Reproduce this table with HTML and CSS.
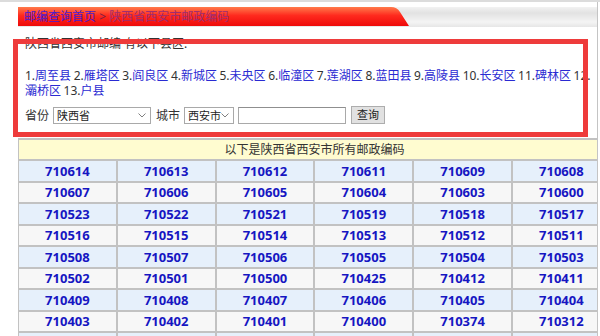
FILE: index.html
```html
<!DOCTYPE html>
<html lang="zh-CN">
<head>
<meta charset="utf-8">
<title>陕西省西安市邮政编码</title>
<link rel="stylesheet" href="styles.css">
</head>
<body>
<div class="topline"></div>
<div class="wrap">
  <div class="crumbbar">
    <div class="tab"><a class="home" href="#">邮编查询首页</a> <span class="sep">&gt;</span> <span class="cur">陕西省西安市邮政编码</span></div>
  </div>
  <div class="panel">
    <p class="intro">陕西省西安市邮编 有以下县区:</p>
    <p class="areas">1.<a href="#">周至县</a> 2.<a href="#">雁塔区</a> 3.<a href="#">阎良区</a> 4.<a href="#">新城区</a> 5.<a href="#">未央区</a> 6.<a href="#">临潼区</a> 7.<a href="#">莲湖区</a> 8.<a href="#">蓝田县</a> 9.<a href="#">高陵县</a> 10.<a href="#">长安区</a> 11.<a href="#">碑林区</a> 12.<wbr><a href="#">灞桥区</a> 13.<a href="#">户县</a></p>
    <form class="query">
      <label class="lbl">省份</label>
      <select class="sel sel-prov"><option>陕西省</option></select>
      <label class="lbl">城市</label>
      <select class="sel sel-city"><option>西安市</option></select>
      <input class="kw" type="text">
      <button class="btn" type="button">查询</button>
    </form>
  </div>
  <div class="codes">
    <div class="head">以下是陕西省西安市所有邮政编码</div>
    <a class="c odd">710614</a><a class="c odd">710613</a><a class="c odd">710612</a><a class="c odd">710611</a><a class="c odd">710609</a><a class="c odd">710608</a>
    <a class="c even">710607</a><a class="c even">710606</a><a class="c even">710605</a><a class="c even">710604</a><a class="c even">710603</a><a class="c even">710600</a>
    <a class="c odd">710523</a><a class="c odd">710522</a><a class="c odd">710521</a><a class="c odd">710519</a><a class="c odd">710518</a><a class="c odd">710517</a>
    <a class="c even">710516</a><a class="c even">710515</a><a class="c even">710514</a><a class="c even">710513</a><a class="c even">710512</a><a class="c even">710511</a>
    <a class="c odd">710508</a><a class="c odd">710507</a><a class="c odd">710506</a><a class="c odd">710505</a><a class="c odd">710504</a><a class="c odd">710503</a>
    <a class="c even">710502</a><a class="c even">710501</a><a class="c even">710500</a><a class="c even">710425</a><a class="c even">710412</a><a class="c even">710411</a>
    <a class="c odd">710409</a><a class="c odd">710408</a><a class="c odd">710407</a><a class="c odd">710406</a><a class="c odd">710405</a><a class="c odd">710404</a>
    <a class="c even">710403</a><a class="c even">710402</a><a class="c even">710401</a><a class="c even">710400</a><a class="c even">710374</a><a class="c even">710312</a>
    <span class="c odd"></span><span class="c odd"></span><span class="c odd"></span><span class="c odd"></span><span class="c odd"></span><span class="c odd"></span>
  </div>
</div>
<div class="mark"></div>
</body>
</html>
```

FILE: styles.css
```css
html, body {
  margin: 0;
  padding: 0;
  background: #fff;
  overflow: hidden;
}
body {
  font-family: "Noto Sans", "Noto Sans CJK SC", sans-serif;
  font-size: 12px;
  color: #333;
  position: relative;
  height: 336px;
}
.topline {
  height: 2px;
  background: #dcdcdc;
}
.wrap {
  margin-left: 18px;
  width: 579px;
  border-right: 1px solid #c4c4c4;
  overflow: hidden;
}
.crumbbar {
  margin-top: 5px;
  height: 20px;
  background: linear-gradient(#f2f2f2, #e2e2e2 30%, #f4f4f4 75%, #e6e6e6);
  display: flex;
}
.tab {
  width: 392px;
  height: 19px;
  line-height: 19px;
  padding-left: 6px;
  box-sizing: border-box;
  background: linear-gradient(#ff7a4a, #ff2a1e 45%, #ee0a0a);
  clip-path: path("M0 0 H373 Q379 0 382 5 L391 19 H0 Z");
  white-space: nowrap;
}
.tab .home {
  color: #4a1ccc;
  text-decoration: none;
}
.tab .sep {
  color: #7a1f45;
}
.tab .cur {
  color: #a02c70;
}
.panel {
  padding: 9px 0 14px 7px;
}
.intro {
  margin: 0;
  line-height: 15.5px;
}
.areas {
  margin: 16px 0 0;
  line-height: 15.5px;
  word-spacing: -0.6px;
}
.areas a {
  color: #2a2ad2;
  text-decoration: none;
}
.query {
  margin-top: 8px;
  display: flex;
  align-items: center;
  height: 17px;
}
.lbl {
  margin-right: 4px;
  line-height: 17px;
}
.sel {
  -webkit-appearance: none;
  appearance: none;
  height: 17px;
  box-sizing: border-box;
  border: 1px solid #a9a9a9;
  border-radius: 0;
  background: #fff url("data:image/svg+xml;utf8,<svg xmlns='http://www.w3.org/2000/svg' width='8' height='5'><path d='M0.5 0.5 L4 4 L7.5 0.5' fill='none' stroke='%23808080'/></svg>") no-repeat right 4px center;
  font-family: "Noto Sans", "Noto Sans CJK SC", sans-serif;
  font-size: 11px;
  color: #222;
  padding: 0 0 0 3px;
  line-height: 15px;
  margin-right: 5px;
}
.sel-prov { width: 98px; }
.sel-city { width: 50px; margin-right: 4px; }
.kw {
  width: 108px;
  height: 17px;
  box-sizing: border-box;
  border: 1px solid #a9a9a9;
  border-top-color: #8f8f8f;
  padding: 0;
  margin: 0 5px 0 0;
}
.btn {
  width: 34px;
  height: 18px;
  box-sizing: border-box;
  border: 1px solid #adadad;
  background: #e1e1e1;
  font-family: "Noto Sans", "Noto Sans CJK SC", sans-serif;
  font-size: 11px;
  color: #222;
  padding: 0;
  line-height: 16px;
}
.codes {
  display: grid;
  grid-template-columns: repeat(6, 96.8px);
  grid-auto-rows: 19.5px;
  gap: 2px;
  padding: 2px;
  margin-left: -1px;
  background: #c2c2c2;
  width: max-content;
}
.head {
  grid-column: 1 / -1;
  background: #fffcd0;
  text-align: center;
  line-height: 19.5px;
  color: #333;
}
.c {
  display: flex;
  align-items: center;
  justify-content: center;
  font-weight: bold;
  font-size: 13px;
  color: #1616c2;
  text-decoration: none;
}
.odd { background: #e6f0fb; }
.even { background: #f7f7f7; }
.mark {
  position: absolute;
  left: 13px;
  top: 39px;
  width: 575px;
  height: 98px;
  box-sizing: border-box;
  border: 5px solid #ee3b3b;
  pointer-events: none;
}
```
